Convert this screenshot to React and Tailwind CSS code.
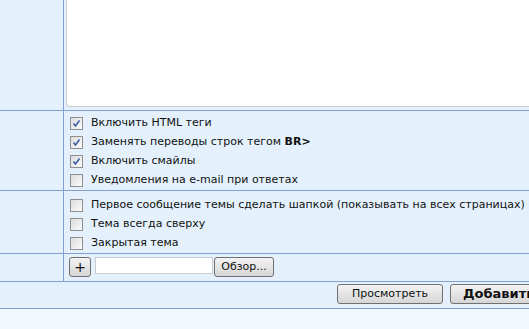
import React from 'react';

const font = { fontFamily: '"DejaVu Sans", Verdana, sans-serif' };

function Check({ checked }) {
  return (
    <span className="relative inline-block w-[13px] h-[13px] shrink-0 border border-[#8e8f8f] bg-gradient-to-br from-[#dcdcdc] to-[#fbfbfb]">
      {checked && (
        <svg className="absolute left-[1px] top-[1px]" width="9" height="9" viewBox="0 0 9 9">
          <path d="M1.5 4.5 L3.5 7 L7.5 1.5" fill="none" stroke="#3a5ea8" strokeWidth="1.6" />
        </svg>
      )}
    </span>
  );
}

function Option({ checked, children }) {
  return (
    <label className="flex items-center h-[19px] gap-2 whitespace-nowrap">
      <Check checked={checked} />
      <span>{children}</span>
    </label>
  );
}

const btn = 'h-[20px] border border-[#707070] rounded-[3px] bg-gradient-to-b from-[#f3f3f3] to-[#d6d6d6] text-[11px] text-[#111] flex items-center justify-center';

export default function App() {
  return (
    <div className="w-[529px] h-[329px] overflow-hidden bg-[#f1f7fe] text-[11px] text-[#111]" style={font}>
      <div className="flex h-[111px] border-b border-[#809fd2] bg-[#e4f1fc]">
        <div className="w-[64px] shrink-0 border-r border-[#809fd2]" />
        <div className="flex-1 min-w-0 pl-[2px]">
          <div className="h-[107px] bg-white border-l border-b border-[#c8cdd4] rounded-bl-[4px]" />
        </div>
      </div>

      <div className="flex h-[80px] border-b border-[#809fd2] bg-[#e4f1fc]">
        <div className="w-[64px] shrink-0 border-r border-[#809fd2]" />
        <div className="flex-1 min-w-0 pl-[6px] pt-[3px]">
          <Option checked>Включить HTML теги</Option>
          <Option checked>Заменять переводы строк тегом <b>BR&gt;</b></Option>
          <Option checked>Включить смайлы</Option>
          <Option>Уведомления на e-mail при ответах</Option>
        </div>
      </div>

      <div className="flex h-[63px] border-b border-[#809fd2] bg-[#e4f1fc]">
        <div className="w-[64px] shrink-0 border-r border-[#809fd2]" />
        <div className="flex-1 min-w-0 pl-[6px] pt-[5px]">
          <Option>Первое сообщение темы сделать шапкой (показывать на всех страницах)</Option>
          <Option>Тема всегда сверху</Option>
          <Option>Закрытая тема</Option>
        </div>
      </div>

      <div className="flex h-[28px] border-b border-[#809fd2] bg-[#e4f1fc]">
        <div className="w-[64px] shrink-0 border-r border-[#809fd2]" />
        <div className="flex-1 min-w-0 flex items-start gap-[4px] pl-[5px] pt-[3px]">
          <button className={btn + ' w-[22px] text-[14px]'}>+</button>
          <div className="w-[118px] h-[17px] bg-white border border-[#c8cdd4]" />
          <button className={btn + ' w-[60px] -ml-[3px]'}>Обзор...</button>
        </div>
      </div>

      <div className="flex h-[27px] border-b border-[#809fd2] bg-[#e4f1fc] gap-[7px] pl-[337px] pt-[2px]">
        <button className={btn + ' w-[106px] shrink-0'}>Просмотреть</button>
        <button className={btn + ' w-[110px] shrink-0 font-bold text-[13px] justify-start pl-[12px]'}>Добавить</button>
      </div>
    </div>
  );
}
